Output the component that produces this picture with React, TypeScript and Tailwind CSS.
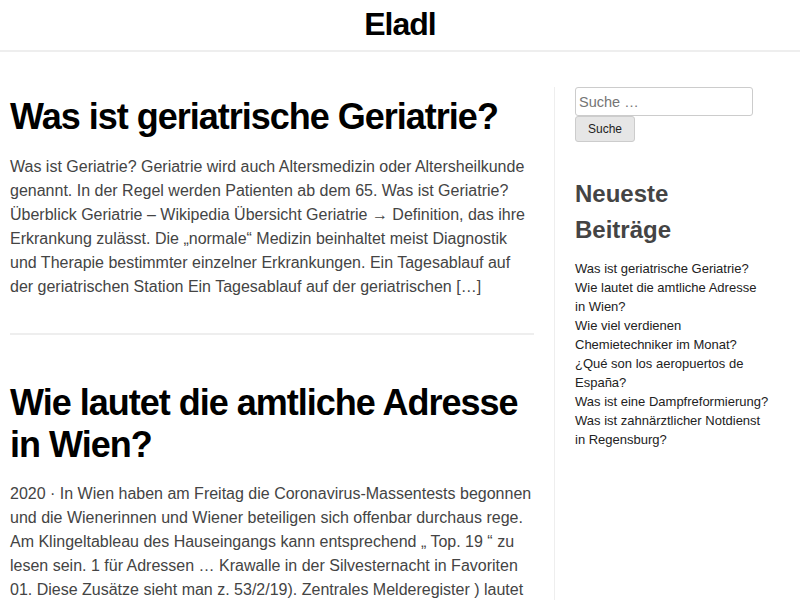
export default function App() {
  const recent = [
    "Was ist geriatrische Geriatrie?",
    "Wie lautet die amtliche Adresse in Wien?",
    "Wie viel verdienen Chemietechniker im Monat?",
    "¿Qué son los aeropuertos de España?",
    "Was ist eine Dampfreformierung?",
    "Was ist zahnärztlicher Notdienst in Regensburg?",
  ];
  return (
    <div className="min-h-[600px] bg-white" style={{ fontFamily: '"Liberation Sans", Arial, sans-serif' }}>
      <header className="h-[52px] border-b-2 border-[#eeeeee] flex items-center justify-center">
        <h1 className="text-[32px] font-bold tracking-[-1px] text-black leading-[50px] mt-[-2px]">Eladl</h1>
      </header>
      <div className="flex">
        <main className="w-[554px] pl-[10px] pr-[20px] pt-[44px]">
          <article>
            <h2 className="text-[36px] font-bold tracking-[-1px] leading-[42px] text-black">Was ist geriatrische Geriatrie?</h2>
            <p className="mt-[17px] text-[16px] leading-[24px] text-[#444]">
              Was ist Geriatrie? Geriatrie wird auch Altersmedizin oder Altersheilkunde genannt. In der Regel werden Patienten ab dem 65. Was ist Geriatrie? Überblick Geriatrie – Wikipedia Übersicht Geriatrie → Definition, das ihre Erkrankung zulässt. Die „normale“ Medizin beinhaltet meist Diagnostik und Therapie bestimmter einzelner Erkrankungen. Ein Tagesablauf auf der geriatrischen Station Ein Tagesablauf auf der geriatrischen […]
            </p>
          </article>
          <div className="mt-[34px] h-[2px] bg-[#eeeeee]" />
          <article className="mt-[47px]">
            <h2 className="text-[36px] font-bold tracking-[-1px] leading-[42px] text-black">Wie lautet die amtliche Adresse in Wien?</h2>
            <p className="mt-[16px] text-[16px] leading-[24px] text-[#444]">
              2020 · In Wien haben am Freitag die Coronavirus-Massentests begonnen und die Wienerinnen und Wiener beteiligen sich offenbar durchaus rege. Am Klingeltableau des Hauseingangs kann entsprechend „ Top. 19 “ zu lesen sein. 1 für Adressen … Krawalle in der Silvesternacht in Favoriten 01. Diese Zusätze sieht man z. 53/2/19). Zentrales Melderegister ) lautet
            </p>
          </article>
        </main>
        <aside className="mt-[35px] border-l border-[#eeeeee] pl-[20px] min-h-[520px]">
          <div className="w-[194px]">
            <input
              type="search"
              placeholder="Suche …"
              className="block w-[178px] h-[29px] border border-[#cccccc] rounded-[3px] px-[3px] text-[14.5px] text-[#333] placeholder:text-[#757575] outline-none"
            />
            <button className="block h-[26px] w-[60px] border border-[#cccccc] rounded-[3px] bg-[#e6e6e6] text-[12px] text-[#222]">
              Suche
            </button>
            <h3 className="mt-[34px] text-[24px] font-bold leading-[36px] text-[#444]">Neueste Beiträge</h3>
            <ul className="mt-[11px] text-[13px] leading-[19px] text-[#222]">
              {recent.map((r) => (
                <li key={r}>{r}</li>
              ))}
            </ul>
          </div>
        </aside>
      </div>
    </div>
  );
}
